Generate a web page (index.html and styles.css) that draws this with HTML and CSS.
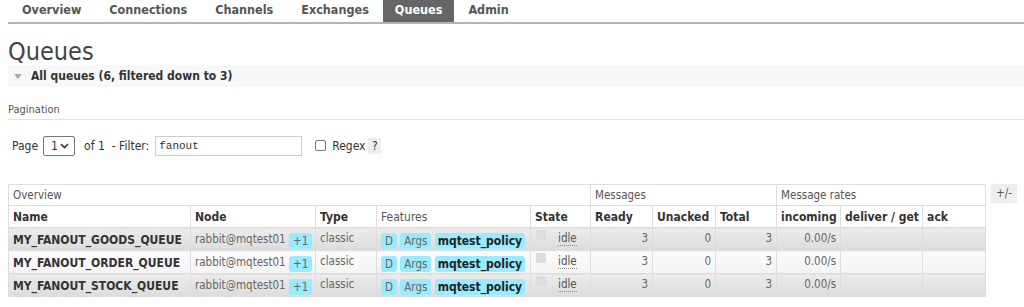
FILE: index.html
```html
<!DOCTYPE html>
<html>
<head>
<meta charset="utf-8">
<link rel="stylesheet" href="styles.css">
</head>
<body>
<ul class="tabs">
  <li>Overview</li>
  <li>Connections</li>
  <li>Channels</li>
  <li>Exchanges</li>
  <li class="active">Queues</li>
  <li>Admin</li>
</ul>
<div class="main">
  <h1>Queues</h1>
  <div class="section-h"><span class="tri"></span>All queues (6, filtered down to 3)</div>
  <div class="pag-title">Pagination</div>
  <div class="pag-row">
    <span>Page</span>
    <span class="select">1 <svg width="9" height="6" viewBox="0 0 9 6"><path d="M1 1l3.5 3.5L8 1" fill="none" stroke="#333" stroke-width="1.6"/></svg></span>
    <span class="of">of 1</span>
    <span>- Filter:</span>
    <span class="input">fanout</span>
    <span class="check"></span>
    <span class="regex">Regex</span>
    <span class="help">?</span>
  </div>
  <div class="table-wrap">
    <table class="list">
      <colgroup>
        <col style="width:182px"><col style="width:125px"><col style="width:61px"><col style="width:154px"><col style="width:60px"><col style="width:62px"><col style="width:63px"><col style="width:61px"><col style="width:64px"><col style="width:82px"><col style="width:63px">
      </colgroup>
      <thead>
        <tr class="group">
          <th colspan="5">Overview</th>
          <th colspan="3">Messages</th>
          <th colspan="3">Message rates</th>
        </tr>
        <tr class="cols">
          <th>Name</th><th>Node</th><th>Type</th><th class="norm">Features</th><th>State</th><th>Ready</th><th>Unacked</th><th>Total</th><th>incoming</th><th>deliver / get</th><th>ack</th>
        </tr>
      </thead>
      <tbody>
        <tr class="alt1">
          <td class="name">MY_FANOUT_GOODS_QUEUE</td>
          <td class="node">rabbit@mqtest01 <span class="badge">+1</span></td>
          <td class="muted">classic</td>
          <td class="feat"><span class="badge">D</span> <span class="badge">Args</span> <span class="badge policy">mqtest_policy</span></td>
          <td class="state"><span class="sq"></span><span class="idle">idle</span></td>
          <td class="num">3</td><td class="num">0</td><td class="num">3</td><td class="num">0.00/s</td><td></td><td></td>
        </tr>
        <tr class="alt2">
          <td class="name">MY_FANOUT_ORDER_QUEUE</td>
          <td class="node">rabbit@mqtest01 <span class="badge">+1</span></td>
          <td class="muted">classic</td>
          <td class="feat"><span class="badge">D</span> <span class="badge">Args</span> <span class="badge policy">mqtest_policy</span></td>
          <td class="state"><span class="sq"></span><span class="idle">idle</span></td>
          <td class="num">3</td><td class="num">0</td><td class="num">3</td><td class="num">0.00/s</td><td></td><td></td>
        </tr>
        <tr class="alt1">
          <td class="name">MY_FANOUT_STOCK_QUEUE</td>
          <td class="node">rabbit@mqtest01 <span class="badge">+1</span></td>
          <td class="muted">classic</td>
          <td class="feat"><span class="badge">D</span> <span class="badge">Args</span> <span class="badge policy">mqtest_policy</span></td>
          <td class="state"><span class="sq"></span><span class="idle">idle</span></td>
          <td class="num">3</td><td class="num">0</td><td class="num">3</td><td class="num">0.00/s</td><td></td><td></td>
        </tr>
      </tbody>
    </table>
    <span class="plusminus">+/-</span>
  </div>
</div>
</body>
</html>
```
FILE: styles.css
```css
html, body {
  margin: 0;
  padding: 0;
  background: #fff;
}
body {
  font-family: "DejaVu Sans", Verdana, sans-serif;
  font-stretch: condensed;
  font-size: 11.5px;
  color: #484848;
}
.tabs {
  list-style: none;
  margin: 0 0 0 8px;
  padding: 0;
  display: flex;
  height: 22px;
  border-bottom: 2px solid #b4b4b4;
}
.tabs li {
  padding: 0 14px;
  line-height: 19px;
  font-weight: bold;
  font-size: 12.5px;
  color: #555;
}
.tabs li.active {
  background: #666;
  color: #fff;
  padding: 0 12px;
}
.main {
  padding: 0 0 0 8px;
}
h1 {
  margin: 15px 0 0 0;
  font-weight: normal;
  font-size: 25px;
  line-height: 26px;
  color: #444;
}
.section-h {
  height: 22px;
  background: #f8f8f8;
  font-weight: bold;
  font-size: 12px;
  color: #333;
  display: flex;
  align-items: center;
}
.tri {
  width: 0;
  height: 0;
  border-left: 4px solid transparent;
  border-right: 4px solid transparent;
  border-top: 5px solid #aaa;
  margin: 0 9px 0 6px;
}
.pag-title {
  margin-top: 16px;
  padding-bottom: 3px;
  border-bottom: 1px solid #e2e2e2;
  font-size: 11px;
  color: #555;
}
.pag-row {
  display: flex;
  align-items: center;
  margin: 15px 0 0 4px;
  height: 21px;
  color: #333;
  font-size: 12px;
}
.select {
  margin-left: 5px;
  width: 32px;
  height: 20px;
  box-sizing: border-box;
  border: 1px solid #767676;
  border-radius: 2px;
  display: flex;
  align-items: center;
  justify-content: space-between;
  padding: 0 5px 0 7px;
  font-size: 12px;
}
.of {
  margin-left: 9px;
  margin-right: 7px;
}
.input {
  margin-left: 6px;
  width: 147px;
  height: 20px;
  box-sizing: border-box;
  border: 1px solid #ccc;
  font-family: "Liberation Mono", monospace;
  font-size: 11px;
  line-height: 18px;
  padding-left: 3px;
}
.check {
  margin-left: 13px;
  width: 11px;
  height: 11px;
  box-sizing: border-box;
  border: 1px solid #767676;
  border-radius: 2px;
}
.regex {
  margin-left: 6px;
}
.help {
  margin-left: 3px;
  width: 13px;
  height: 16px;
  background: #eee;
  text-align: center;
  line-height: 16px;
}
.table-wrap {
  display: flex;
  align-items: flex-start;
  margin-top: 28px;
}
table.list {
  border-collapse: collapse;
  table-layout: fixed;
  width: 977px;
}
table.list th, table.list td {
  border: 1px solid #ddd;
  padding: 0 4px;
  text-align: left;
  white-space: nowrap;
  overflow: hidden;
}
tr.group th {
  font-weight: normal;
  height: 20px;
  color: #555;
  font-size: 11.5px;
}
tr.cols th {
  height: 21px;
  font-weight: bold;
  color: #333;
  font-size: 12px;
}
tr.cols th.norm {
  font-weight: normal;
  color: #555;
}
table.list tbody td {
  height: 23px;
  box-sizing: border-box;
  padding-top: 3px;
  padding-bottom: 0;
  line-height: 17px;
  vertical-align: top;
  color: #666;
}
tr.alt1 td {
  background: linear-gradient(#ececec, #dcdcdc);
}
tr.alt2 td {
  background: linear-gradient(#fbfbfb, #f3f3f3);
}
table.list td.name {
  font-weight: bold;
  color: #333;
  font-size: 12px;
  padding-top: 4px;
}
.badge {
  display: inline-block;
  background: #99ebff;
  border-radius: 3px;
  padding: 0 4px;
  line-height: 16px;
  vertical-align: top;
  margin-top: 2px;
  color: #666;
}
.badge.policy {
  font-weight: bold;
  color: #222;
  font-size: 12px;
  padding: 0 3px;
}
table.list td.muted,
table.list td.state,
table.list td.num {
  padding-top: 2px;
}
.sq {
  display: inline-block;
  width: 10px;
  height: 10px;
  background: #ddd;
  margin: 0 12px 0 1px;
  vertical-align: top;
}
.idle {
  border-bottom: 1px dotted #888;
  color: #555;
}
table.list td.num {
  text-align: right;
}
.plusminus {
  margin-left: 5px;
  background: #eee;
  padding: 0 5px;
  line-height: 19px;
  color: #555;
}
```
